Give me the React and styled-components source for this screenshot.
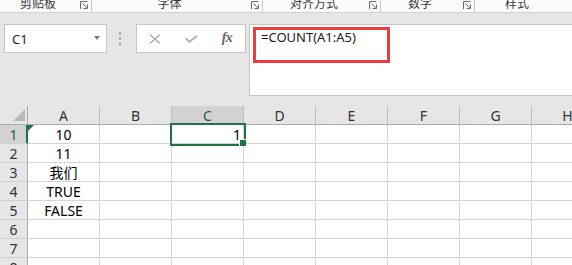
import React from "react";
import styled, { createGlobalStyle } from "styled-components";

// ============ DATA ============

const COLUMNS = ["A", "B", "C", "D", "E", "F", "G", "H"];
const ROWS = [1, 2, 3, 4, 5, 6, 7, 8];
const VALUES = { A1: "10", A2: "11", A3: "我们", A4: "TRUE", A5: "FALSE", C1: "1" };
const RIGHT_ALIGNED = { C1: true };
const ACTIVE = { col: "C", row: 1 };

const GROUPS = [
  { label: "剪贴板", width: 92, launcher: true },
  { label: "字体", width: 171, launcher: true },
  { label: "对齐方式", width: 118, launcher: true },
  { label: "数字", width: 94, launcher: true },
  { label: "样式", width: 128, launcher: false, pad: 30 },
];

const GREEN = "#217346";
const TEXT_FONT = `"Noto Sans", "Noto Sans CJK SC", sans-serif`;

// ============ GLOBAL ============

const GlobalStyle = createGlobalStyle`
  html, body {
    margin: 0;
    padding: 0;
    background: #e6e6e6;
    overflow: hidden;
  }
  body {
    font-family: ${TEXT_FONT};
    width: 572px;
    height: 265px;
  }
`;

// ============ RIBBON ============

const Page = styled.div`
  width: 572px;
  height: 265px;
  overflow: hidden;
  display: flex;
  flex-direction: column;
`;

const Ribbon = styled.div`
  height: 12px;
  flex-shrink: 0;
  display: flex;
  background: #fbfbfb;
  border-bottom: 1px solid #d2d2d2;
  overflow: hidden;
`;

const Group = styled.div`
  flex-shrink: 0;
  width: ${(p) => p.$width}px;
  display: flex;
  align-items: flex-start;
  padding-left: ${(p) => p.$pad || 0}px;
  box-sizing: border-box;
  border-right: ${(p) => (p.$last ? "none" : "1px solid #c6c6c6")};
`;

const GroupLabel = styled.span`
  flex: 1;
  text-align: ${(p) => (p.$left ? "left" : "center")};
  font-family: "Noto Sans CJK SC", sans-serif;
  font-size: 12px;
  line-height: 12px;
  margin-top: -3px;
  color: #3a3a3a;
  white-space: nowrap;
`;

const Launcher = styled.svg`
  flex-shrink: 0;
  width: 8px;
  height: 10px;
  margin: 0 3px 0 4px;
`;

// ============ FORMULA ROW ============

const FormulaRow = styled.div`
  display: flex;
  align-items: flex-start;
  padding-left: 4px;
  margin-top: 11px;
  flex-shrink: 0;
`;

const NameBox = styled.div`
  width: 103px;
  height: 29px;
  box-sizing: border-box;
  background: #fff;
  border: 1px solid #c6c6c6;
  display: flex;
  align-items: center;
  padding: 0 6px 0 7px;
`;

const NameText = styled.span`
  flex: 1;
  font-size: 13px;
  color: #222;
`;

const Caret = styled.span`
  width: 0;
  height: 0;
  border-left: 3.5px solid transparent;
  border-right: 3.5px solid transparent;
  border-top: 4px solid #7a7a7a;
  margin-top: -2px;
`;

const Grip = styled.div`
  width: 3px;
  height: 29px;
  margin: 0 14px 0 12px;
  display: flex;
  flex-direction: column;
  justify-content: center;
  gap: 2px;
`;

const GripDot = styled.span`
  width: 2px;
  height: 3px;
  background: #ababab;
`;

const ActionBox = styled.div`
  width: 110px;
  height: 29px;
  box-sizing: border-box;
  background: #fff;
  border: 1px solid #c6c6c6;
  display: grid;
  grid-template-columns: repeat(3, 36px);
  align-items: center;
  justify-items: center;
`;

const ActionIcon = styled.svg`
  display: block;
`;

const Fx = styled.span`
  font-family: "Liberation Serif", serif;
  font-style: italic;
  font-weight: bold;
  font-size: 14px;
  color: #666;
  letter-spacing: -0.5px;
  margin-top: -1px;
`;

const FormulaBar = styled.div`
  flex: 1;
  height: 72px;
  margin-left: 3px;
  margin-right: -20px;
  box-sizing: border-box;
  background: #fff;
  border: 1px solid #c6c6c6;
  padding: 2px 0 0 3px;
`;

const Highlight = styled.div`
  width: 137px;
  height: 36px;
  box-sizing: border-box;
  border: 3px solid #ee3b3b;
  padding-left: 5px;
  font-size: 13px;
  line-height: 15px;
  color: #1a1a1a;
  white-space: nowrap;
`;

// ============ SHEET ============

const Sheet = styled.div`
  margin-top: 10px;
  display: grid;
  grid-template-columns: 28px repeat(${COLUMNS.length}, 72px);
  grid-auto-rows: 19px;
  width: max-content;
`;

const Corner = styled.div`
  box-sizing: border-box;
  border-right: 1px solid #ababab;
  border-bottom: 1px solid #ababab;
  display: flex;
  align-items: flex-end;
  justify-content: flex-end;
  padding: 0 2px 3px 0;
`;

const CornerMark = styled.span`
  width: 0;
  height: 0;
  border-left: 12px solid transparent;
  border-bottom: 12px solid #b9b9b9;
`;

const ColHeader = styled.div`
  box-sizing: border-box;
  background: ${(p) => (p.$active ? "#d2d2d2" : "#e6e6e6")};
  border-right: 1px solid #bdbdbd;
  border-bottom: 1px solid #ababab;
  display: flex;
  align-items: flex-end;
  justify-content: center;
  font-size: 14px;
  line-height: 17px;
  color: ${(p) => (p.$active ? "#1d5e3a" : "#333")};
`;

const RowHeader = styled.div`
  box-sizing: border-box;
  background: ${(p) => (p.$active ? "#d2d2d2" : "#e6e6e6")};
  border-right: ${(p) => (p.$active ? `2px solid ${GREEN}` : "1px solid #ababab")};
  border-bottom: 1px solid #d0d0d0;
  display: flex;
  align-items: flex-end;
  justify-content: center;
  padding-left: ${(p) => (p.$active ? 1 : 0)}px;
  font-size: 14px;
  line-height: 17px;
  color: ${(p) => (p.$active ? "#1d5e3a" : "#333")};
`;

const Cell = styled.div`
  position: relative;
  box-sizing: border-box;
  background: #fff;
  border-right: 1px solid #d4d4d4;
  border-bottom: 1px solid #d4d4d4;
  display: flex;
  align-items: flex-end;
  justify-content: ${(p) => (p.$right ? "flex-end" : "center")};
  padding: 0 2px 0 2px;
  font-size: 14px;
  line-height: 17px;
  color: #000;
  white-space: nowrap;

  ${(p) =>
    p.$active &&
    `
    z-index: 1;
    outline: 2px solid ${GREEN};
  `}
`;

const FillHandle = styled.span`
  position: absolute;
  right: -3px;
  bottom: -3px;
  width: 6px;
  height: 6px;
  background: ${GREEN};
  border-left: 1px solid #fff;
  border-top: 1px solid #fff;
`;

const ErrorMark = styled.span`
  position: absolute;
  left: 0;
  top: 0;
  width: 0;
  height: 0;
  border-top: 6px solid #1e7145;
  border-right: 6px solid transparent;
`;

// ============ COMPONENT ============

const LauncherIcon = () => (
  <Launcher viewBox="0 0 8 10">
    <path d="M0.5 9 V1.5 H7.5" stroke="#6a6a6a" fill="none" />
    <path d="M2.5 3.5 L6.8 7.8" stroke="#6a6a6a" fill="none" />
    <path d="M3.5 8.5 H7.5 V4.5" stroke="#6a6a6a" fill="none" />
  </Launcher>
);

const App = () => {
  return (
    <Page>
      <GlobalStyle />

      <Ribbon>
        {GROUPS.map((g, i) => (
          <Group key={g.label} $width={g.width} $pad={g.pad} $last={i === GROUPS.length - 1}>
            <GroupLabel $left={!!g.pad}>{g.label}</GroupLabel>
            {g.launcher && <LauncherIcon />}
          </Group>
        ))}
      </Ribbon>

      <FormulaRow>
        <NameBox>
          <NameText>C1</NameText>
          <Caret />
        </NameBox>

        <Grip>
          <GripDot />
          <GripDot />
          <GripDot />
        </Grip>

        <ActionBox>
          <ActionIcon width="12" height="10" viewBox="0 0 12 10">
            <path d="M1 0.5 L11 9.5 M11 0.5 L1 9.5" stroke="#a9a9a9" strokeWidth="1.3" />
          </ActionIcon>
          <ActionIcon width="13" height="8" viewBox="0 0 13 8">
            <path d="M0.8 3.2 L4.3 6.8 L12.2 0.8" stroke="#b3b3b3" strokeWidth="2" fill="none" />
          </ActionIcon>
          <Fx>fx</Fx>
        </ActionBox>

        <FormulaBar>
          <Highlight>=COUNT(A1:A5)</Highlight>
        </FormulaBar>
      </FormulaRow>

      <Sheet>
        <Corner>
          <CornerMark />
        </Corner>
        {COLUMNS.map((c) => (
          <ColHeader key={c} $active={c === ACTIVE.col}>
            {c}
          </ColHeader>
        ))}

        {ROWS.map((r) => (
          <React.Fragment key={r}>
            <RowHeader $active={r === ACTIVE.row}>{r}</RowHeader>
            {COLUMNS.map((c) => {
              const id = c + r;
              const active = c === ACTIVE.col && r === ACTIVE.row;
              return (
                <Cell key={id} $right={RIGHT_ALIGNED[id]} $active={active}>
                  {id === "A1" && <ErrorMark />}
                  {VALUES[id]}
                  {active && <FillHandle />}
                </Cell>
              );
            })}
          </React.Fragment>
        ))}
      </Sheet>
    </Page>
  );
};

export default App;
